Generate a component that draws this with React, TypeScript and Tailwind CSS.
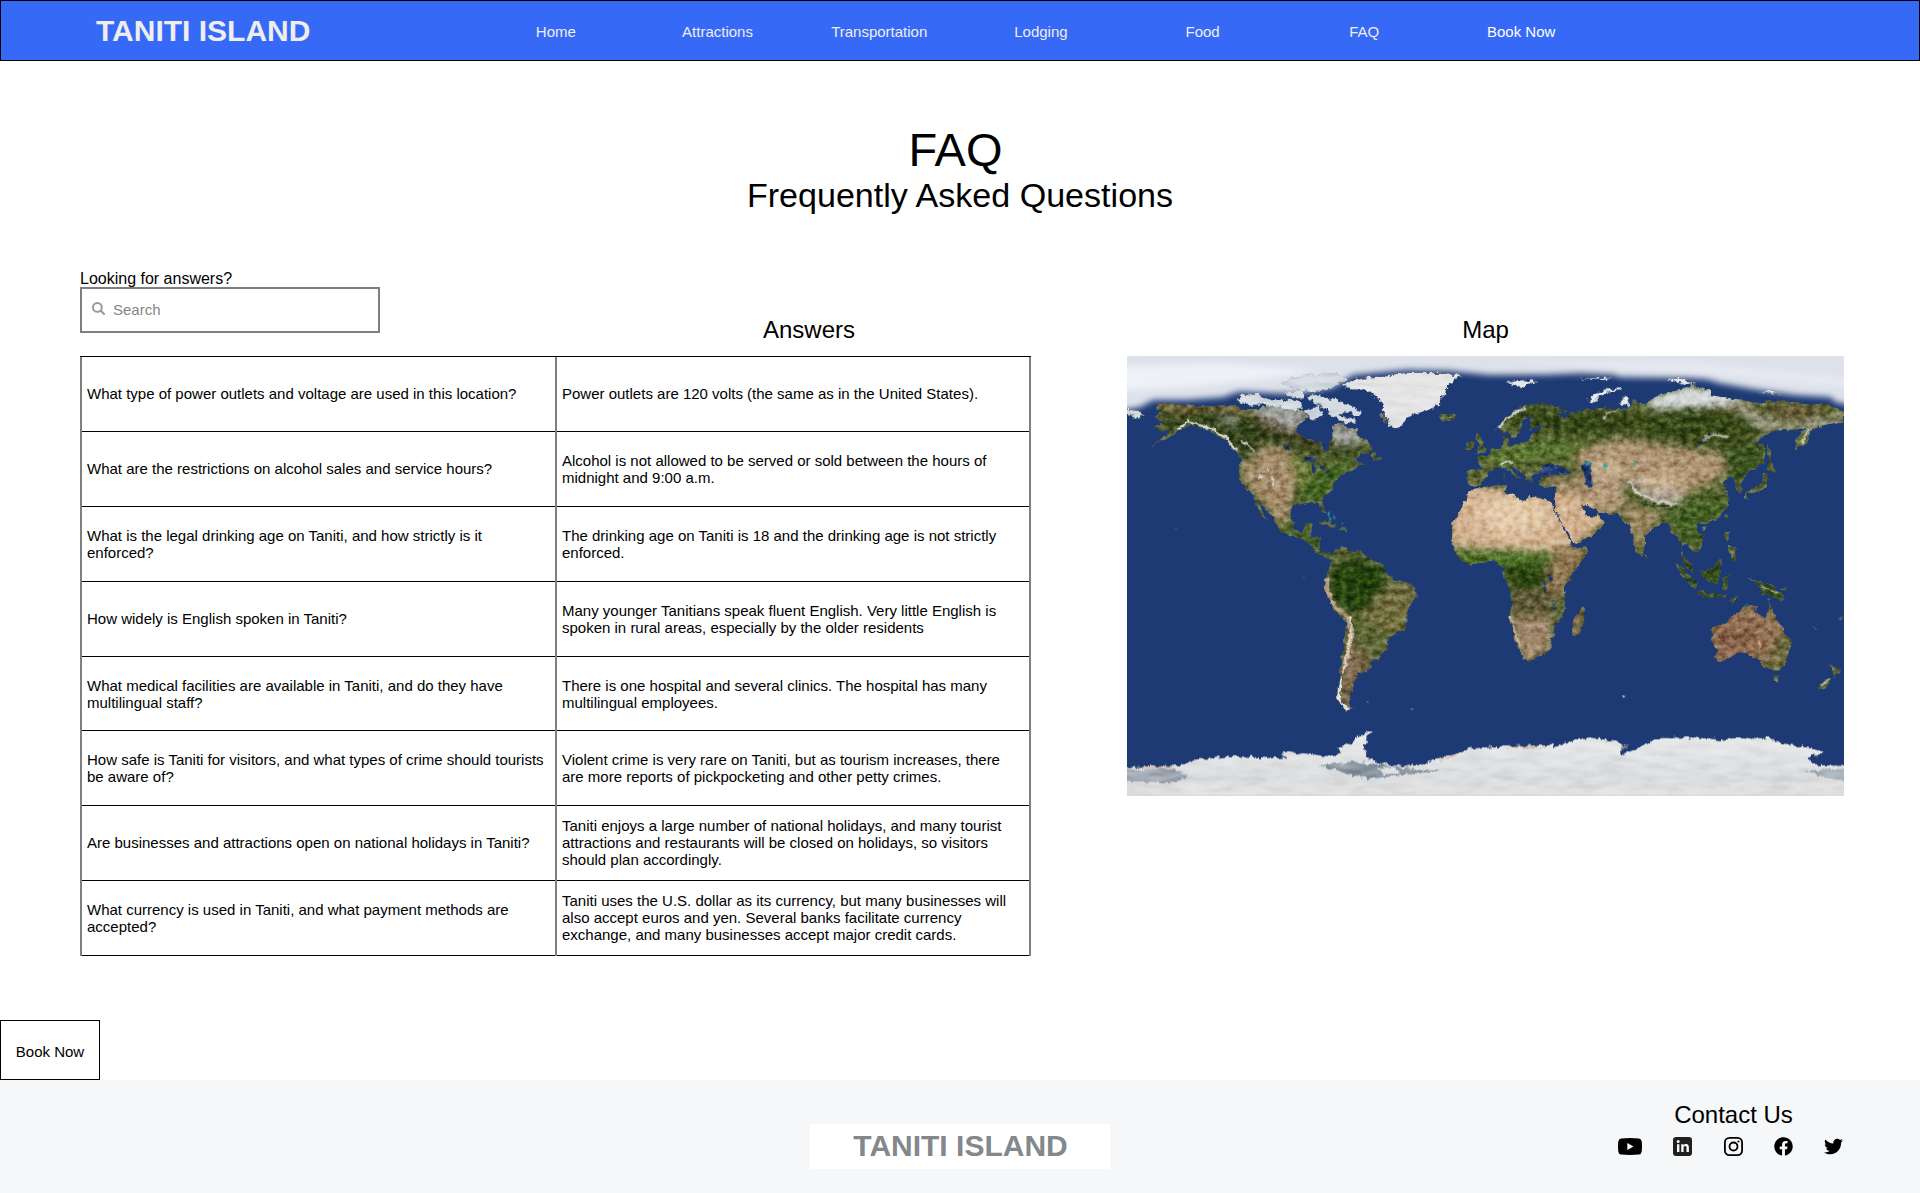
import React from "react";
import { FaFacebook, FaTwitter } from "react-icons/fa";

const navItems = ["Home", "Attractions", "Transportation", "Lodging", "Food", "FAQ"];

const faqs: { q: string; a: string; h: string; lift: string }[] = [
  {
    q: "What type of power outlets and voltage are used in this location?",
    a: "Power outlets are 120 volts (the same as in the United States).",
    h: "h-[75px]",
    lift: "pb-px",
  },
  {
    q: "What are the restrictions on alcohol sales and service hours?",
    a: "Alcohol is not allowed to be served or sold between the hours of midnight and 9:00 a.m.",
    h: "h-[75px]",
    lift: "pb-[0.8px]",
  },
  {
    q: "What is the legal drinking age on Taniti, and how strictly is it enforced?",
    a: "The drinking age on Taniti is 18 and the drinking age is not strictly enforced.",
    h: "h-[75px]",
    lift: "pb-0",
  },
  {
    q: "How widely is English spoken in Taniti?",
    a: "Many younger Tanitians speak fluent English. Very little English is spoken in rural areas, especially by the older residents",
    h: "h-[75px]",
    lift: "pb-[0.8px]",
  },
  {
    q: "What medical facilities are available in Taniti, and do they have multilingual staff?",
    a: "There is one hospital and several clinics. The hospital has many multilingual employees.",
    h: "h-[74px]",
    lift: "pb-0",
  },
  {
    q: "How safe is Taniti for visitors, and what types of crime should tourists be aware of?",
    a: "Violent crime is very rare on Taniti, but as tourism increases, there are more reports of pickpocketing and other petty crimes.",
    h: "h-[75px]",
    lift: "pb-0",
  },
  {
    q: "Are businesses and attractions open on national holidays in Taniti?",
    a: "Taniti enjoys a large number of national holidays, and many tourist attractions and restaurants will be closed on holidays, so visitors should plan accordingly.",
    h: "h-[75px]",
    lift: "pb-px",
  },
  {
    q: "What currency is used in Taniti, and what payment methods are accepted?",
    a: "Taniti uses the U.S. dollar as its currency, but many businesses will also accept euros and yen. Several banks facilitate currency exchange, and many businesses accept major credit cards.",
    h: "h-[75px]",
    lift: "pb-[0.8px]",
  },
];

/* Outlines of the western hemisphere, in the west half's own coordinates. */
const westLand = [
  "M118,162 160,160 215,165 290,170 340,165 385,182 440,170 470,160 500,165 560,185 560,205 530,225 530,245 550,262 580,270 605,278 612,300 625,300 625,275 638,262 635,225 660,220 690,235 712,238 725,265 755,290 760,300 745,310 720,312 705,330 735,340 700,358 680,362 660,378 645,390 640,415 615,438 603,450 612,470 617,490 606,490 596,458 575,455 555,463 535,460 515,472 514,510 525,540 548,545 558,522 578,520 572,545 570,562 598,568 598,600 615,615 632,612 645,625 632,628 612,620 590,605 565,578 540,562 510,555 480,540 468,525 460,505 440,480 412,445 432,488 443,508 430,502 412,468 398,435 385,425 370,405 357,380 356,350 362,325 345,302 325,280 300,262 270,245 235,232 200,230 180,240 155,258 125,273 90,290 122,268 150,244 125,242 105,232 130,215 100,200 130,190 105,178Z",
  "M632,640 640,610 665,590 680,600 700,600 725,602 745,628 775,635 795,655 800,682 830,690 862,700 885,715 887,740 870,770 862,785 862,820 850,842 820,850 805,870 802,890 775,930 750,932 757,950 735,965 712,970 715,985 700,1000 700,1015 690,1040 685,1055 690,1068 705,1080 675,1080 655,1055 650,1030 660,970 665,930 672,880 678,820 660,800 640,780 625,745 612,715 615,690 625,665Z",
  "M955,198 975,192 1005,195 1012,205 990,213 965,208Z",
  "M1068,250 1082,252 1085,280 1105,295 1098,306 1066,310 1080,290 1070,275Z",
  "M1042,278 1060,272 1060,292 1038,300Z",
  "M593,515 620,508 652,528 640,532 610,518Z",
  "M655,545 668,532 688,542 670,546Z",
  "M748,318 765,305 780,330 765,332Z",
  "M736,1055 750,1055 745,1061Z",
];

/* Outlines of the eastern hemisphere, in the east half's own coordinates. */
const eastLand = [
  "M50,235 65,212 90,195 120,172 165,160 200,162 240,175 262,185 230,195 250,205 280,188 330,178 375,173 410,178 440,180 460,150 500,165 510,148 545,130 600,120 640,108 690,118 690,135 720,140 790,150 820,158 900,152 950,160 1000,165 1060,168 1092,185 1092,215 1050,225 1010,235 990,245 985,270 952,302 945,270 965,245 985,230 940,240 900,240 870,245 840,265 820,278 850,285 856,310 850,340 830,355 810,362 790,375 785,395 788,420 775,425 768,405 765,385 745,380 722,395 745,405 735,420 745,440 742,470 720,500 690,515 668,520 650,522 655,545 668,565 668,590 648,613 640,600 625,590 612,580 605,590 612,620 632,640 636,665 620,650 605,620 603,580 595,560 580,558 570,530 560,515 540,520 520,535 495,555 495,590 484,617 470,605 455,560 450,525 430,515 415,492 385,490 355,488 345,480 325,468 305,458 310,480 325,498 345,500 354,488 360,505 372,515 360,540 330,560 280,583 265,550 240,515 225,480 222,450 230,415 232,408 200,410 180,408 178,390 182,378 240,375 240,345 190,345 175,375 158,372 150,380 158,400 145,395 135,378 115,365 92,345 90,355 118,375 125,388 100,375 80,355 60,352 30,362 15,385 -5,405 -35,408 -38,380 -35,362 10,358 5,345 -10,325 20,318 40,300 65,290 70,262 80,258 85,285 110,285 150,268 155,250 180,240 190,232 150,235 148,215 158,198 145,195 128,215 120,240 110,265 92,262 85,240 65,248Z",
  "M-25,418 10,410 75,405 80,425 110,445 130,455 150,438 200,450 215,455 225,490 245,530 270,570 275,595 320,592 318,615 295,650 265,690 250,715 258,745 255,785 235,805 225,830 228,855 210,865 212,885 195,910 165,928 130,930 122,905 105,875 100,835 88,800 95,760 90,720 72,680 75,660 60,645 40,630 0,640 -30,643 -60,630 -75,600 -85,580 -82,515 -60,480 -40,450 -35,425Z",
  "M310,770 316,785 300,850 290,865 277,860 278,835 285,800 300,790Z",
  "M865,283 873,300 872,340 884,362 864,364Z",
  "M852,368 862,375 860,412 835,422 800,434 803,446 795,446 797,430 825,412 848,395Z",
  "M738,492 744,500 736,515Z",
  "M736,542 746,545 745,575 736,570Z",
  "M745,590 765,592 770,630 755,632Z",
  "M665,530 678,530 672,544Z",
  "M585,638 605,650 650,700 648,720 615,690Z",
  "M650,722 690,730 742,738 735,746 655,733Z",
  "M750,748 775,740 760,756Z",
  "M668,665 695,655 715,628 724,650 712,700 690,702 670,685Z",
  "M730,680 752,668 740,690 748,715 730,718Z",
  "M800,682 830,696 880,708 900,728 915,752 870,740 845,728 838,710Z",
  "M905,720 925,712 915,724Z",
  "M695,840 700,830 740,820 770,785 800,765 830,768 828,790 855,805 862,790 867,755 885,800 910,840 932,870 930,905 910,950 880,962 850,955 835,930 820,920 790,908 750,920 715,935 705,925 710,900 695,870Z",
  "M880,976 902,978 893,995Z",
  "M1050,933 1066,955 1080,960 1065,982 1058,965Z",
  "M1055,982 1032,1018 1013,1014 1040,988Z",
  "M494,608 504,625 498,633Z",
  "M68,368 74,370 74,388 68,388Z",
];

const westSnow = [
  "M350,150 365,130 420,135 450,150 500,148 545,155 545,178 500,180 480,172 430,165 380,165Z",
  "M480,100 540,78 660,70 682,90 620,120 570,125 510,115Z",
  "M560,140 600,136 650,150 690,165 725,185 712,197 680,185 655,195 700,205 712,222 660,215 635,198 615,172 580,160Z",
  "M548,178 600,168 608,195 590,210 565,202Z",
  "M490,125 550,122 548,142 500,140Z",
  "M21,178 60,182 75,195 50,205 21,195Z",
];
const greenland =
  "M665,105 700,90 780,78 860,68 980,68 1025,78 985,100 980,125 960,150 965,165 910,185 860,200 845,225 832,238 810,228 795,200 790,160 765,140 745,122 700,118Z";
const eastSnow = [
  "M325,155 335,135 370,118 428,114 425,120 380,128 350,142 355,158Z",
  "M80,97 130,90 178,92 140,105 120,115Z",
  "M560,85 600,85 650,103 610,104Z",
  "M285,88 350,84 402,80 380,90Z",
  "M835,122 910,127 870,132Z",
  "M415,160 435,142 450,150 445,165 425,168Z",
];

const west = "translate(-21 -18)";
const east = "translate(1059 -18)";

function WorldMap() {
  return (
    <svg
      className="block h-[440px] w-[717px]"
      viewBox="0 0 2151 1320"
      preserveAspectRatio="none"
      role="img"
      aria-label="World map"
    >
      <defs>
        <clipPath id="land">
          {westLand.map((d) => (
            <path key={d} d={d} transform={west} />
          ))}
          {eastLand.map((d) => (
            <path key={d} d={d} transform={east} />
          ))}
        </clipPath>
        <filter id="soft" x="-50%" y="-50%" width="200%" height="200%" colorInterpolationFilters="sRGB">
          <feGaussianBlur stdDeviation="13" />
        </filter>
        <filter id="haze" x="-10%" y="-50%" width="120%" height="200%" colorInterpolationFilters="sRGB">
          <feGaussianBlur stdDeviation="9" />
        </filter>
        <filter
          id="terrain"
          filterUnits="userSpaceOnUse"
          x="0"
          y="0"
          width="2151"
          height="1320"
          colorInterpolationFilters="sRGB"
        >
          <feTurbulence type="fractalNoise" baseFrequency="0.045" numOctaves="4" seed="4" result="warp" />
          <feDisplacementMap in="SourceGraphic" in2="warp" scale="20" xChannelSelector="R" yChannelSelector="G" result="shape" />
          <feTurbulence type="fractalNoise" baseFrequency="0.05 0.06" numOctaves="5" seed="11" />
          <feColorMatrix values="1 0 0 0 -0.02  1 0 0 0 -0.02  1 0 0 0 -0.02  0 0 0 0 1" result="grain" />
          <feBlend in="grain" in2="shape" mode="soft-light" />
          <feComposite in2="shape" operator="in" />
        </filter>
        <filter
          id="ice"
          filterUnits="userSpaceOnUse"
          x="0"
          y="0"
          width="2151"
          height="1320"
          colorInterpolationFilters="sRGB"
        >
          <feTurbulence type="fractalNoise" baseFrequency="0.06" numOctaves="4" seed="7" result="warp" />
          <feDisplacementMap in="SourceGraphic" in2="warp" scale="22" xChannelSelector="R" yChannelSelector="G" result="shape" />
          <feTurbulence type="fractalNoise" baseFrequency="0.012 0.05" numOctaves="5" seed="3" />
          <feColorMatrix values="0.7 0 0 0 0.15  0.7 0 0 0 0.15  0.7 0 0 0 0.15  0 0 0 0 1" result="grain" />
          <feBlend in="grain" in2="shape" mode="soft-light" />
          <feComposite in2="shape" operator="in" />
        </filter>
        <linearGradient id="southIce" x1="0" y1="0" x2="0" y2="1">
          <stop offset="0" stopColor="#e9eaec" />
          <stop offset="0.6" stopColor="#dcdddf" />
          <stop offset="1" stopColor="#e6e6e7" />
        </linearGradient>
      </defs>

      <rect width="2151" height="1320" fill="#1e3a74" />

      {/* Arctic pack ice */}
      <g transform={west} filter="url(#haze)">
        <path
          d="M-40,-60 H2220 V168 L2150,158 2130,142 2030,136 1900,118 1800,100 1760,88 1700,84 1500,82 1480,74 1380,70 1280,74 1110,75 980,62 860,60 700,75 640,112 520,132 355,125 310,142 200,150 100,150 60,172 -40,190Z"
          fill="#dde1ea"
        />
        <path d="M-40,50 L300,40 600,62 400,90 200,110 -40,125Z" fill="#eff1f8" />
        <path d="M1100,30 L1700,35 2200,85 2200,115 1800,75 1400,50Z" fill="#e6e9f0" />
      </g>

      {/* Continents */}
      <g filter="url(#terrain)">
        <g clipPath="url(#land)">
          <rect width="2151" height="1320" fill="#5f6936" />
          <g filter="url(#soft)">
            <g transform={west}>
              <path d="M90,150 L400,160 400,190 300,185 100,185Z" fill="#7d6a3c" />
              <path d="M120,195 L300,180 480,235 600,285 760,300 700,325 520,300 420,275 380,330 340,290 250,225 130,235Z" fill="#34441a" />
              <path d="M380,195 L560,240 600,275 560,280 420,230Z" fill="#57482c" />
              <path d="M380,160 L560,165 560,235 500,240 420,200Z" fill="#a0a39f" />
              <path d="M630,215 L715,230 735,275 680,290 630,270Z" fill="#a0a19f" />
              <path d="M290,190 L350,205 350,235 310,225Z" fill="#90958a" />
              <path d="M420,285 L510,290 530,360 525,420 510,470 500,530 460,500 400,425 365,390 368,330 400,340Z" fill="#a68e6c" />
              <path d="M490,300 L560,340 580,400 530,430 520,350Z" fill="#74813d" />
              <path d="M580,370 L700,320 650,400 610,440 530,460 540,420Z" fill="#41651f" />
              <path d="M470,520 L600,540 640,620 580,600 500,550Z" fill="#4d6826" />
              <path d="M635,650 L710,625 790,650 800,740 770,780 700,790 650,755 625,700Z" fill="#24430d" />
              <path d="M720,795 L800,700 880,720 860,840 790,860Z" fill="#75703f" />
              <path d="M830,700 L890,710 885,745 850,740Z" fill="#7b7250" />
              <path d="M670,930 L700,870 755,940 700,1010 690,1070 655,1060Z" fill="#826a50" />
            </g>
            <g transform={east}>
              <path d="M-90,400 L230,430 290,590 190,605 -90,590Z" fill="#d5b696" />
              <path d="M-20,480 L90,430 190,470 200,530 60,560Z" fill="#e3cbab" />
              <path d="M-90,605 L230,605 200,640 60,650 -60,650Z" fill="#517629" />
              <path d="M75,645 L195,645 190,710 110,715 75,690Z" fill="#2a450f" />
              <path d="M225,600 L330,595 290,660 240,740 200,740 205,650Z" fill="#8f7650" />
              <path d="M90,725 L200,720 215,790 100,790Z" fill="#615837" />
              <path d="M90,800 L215,800 215,900 130,940Z" fill="#a3896d" />
              <path d="M215,410 L300,430 380,515 280,590 220,490Z" fill="#d3b492" />
              <path d="M180,385 L300,375 330,440 230,420Z" fill="#94805b" />
              <path d="M60,200 L150,165 500,190 780,160 830,200 820,270 640,290 480,250 300,260 180,250 90,220Z" fill="#384a18" />
              <path d="M690,150 L780,155 830,170 800,195 680,175Z" fill="#6b5e38" />
              <path d="M500,150 L600,115 690,115 790,150 780,165 620,172 520,178Z" fill="#dcdfe2" />
              <path d="M780,150 L840,200 960,225 990,205 1060,205 1092,180 1092,225 940,245 840,235 785,200Z" fill="#a5a38f" />
              <path d="M840,165 L1050,175 1000,205 900,205Z" fill="#665835" />
              <path d="M-40,310 L170,270 330,275 290,320 180,335 60,345Z" fill="#5a742f" />
              <path d="M280,310 L420,265 520,280 720,310 770,320 720,380 620,430 430,400 320,400 300,350Z" fill="#b09675" />
              <path d="M300,400 L420,400 440,460 400,490 330,475Z" fill="#b49b7b" />
              <path d="M335,330 L420,330 430,370 345,385Z" fill="#c9b493" />
              <path d="M440,385 L560,395 620,440 600,475 520,465Z" fill="#b3a796" />
              <path d="M480,380 L600,378 600,405 500,408Z" fill="#d6bb96" />
              <path d="M430,460 L540,490 510,540 480,600 440,520Z" fill="#a08b65" />
              <path d="M560,480 L640,440 740,440 735,500 660,525 660,600 590,560Z" fill="#476225" />
              <path d="M760,285 L860,290 840,350 770,420 720,300Z" fill="#3b531e" />
              <path d="M580,640 L920,640 920,750 640,740Z" fill="#36501b" />
              <path d="M690,770 L860,765 940,870 900,940 690,940Z" fill="#947355" />
              <path d="M700,840 L830,830 830,890 720,900Z" fill="#876148" />
              <path d="M900,850 L940,870 930,970 850,965Z" fill="#6d6a3d" />
              <path d="M275,770 L305,770 295,870 270,870Z" fill="#8f6e51" />
            </g>
          </g>
          <g fill="none" strokeLinecap="round" strokeLinejoin="round">
            <g transform={west}>
              <path d="M622,690 618,720 640,765 680,800 695,840 685,900 675,950" stroke="#b39d83" strokeWidth="14" />
              <path d="M690,800 692,850 680,920 672,970" stroke="#dccdc2" strokeWidth="6" />
              <path d="M662,985 656,1035 664,1062 685,1078" stroke="#dfe4e8" strokeWidth="8" />
              <path d="M175,235 200,216 240,225 285,240 318,265 350,300" stroke="#dadcd8" strokeWidth="7" />
              <path d="M365,270 405,305" stroke="#b3b7b0" strokeWidth="7" />
              <path d="M420,375 422,385M455,380 460,400M440,355 442,360" stroke="#cfcdc2" strokeWidth="7" />
              <path d="M360,370 385,425" stroke="#6a6b34" strokeWidth="8" />
            </g>
            <g transform={east}>
              <path d="M55,235 70,212 100,193 130,175" stroke="#c5c8c8" strokeWidth="9" />
              <path d="M60,345 85,335 95,342" stroke="#d7d7d2" strokeWidth="5" />
              <path d="M370,205 378,190 410,183" stroke="#a9af9f" strokeWidth="4" />
              <path d="M455,430 500,464 590,474" stroke="#3a511a" strokeWidth="8" />
              <path d="M450,395 470,425 520,452 590,462" stroke="#cbc5bd" strokeWidth="9" />
              <path d="M670,270 700,250 740,260" stroke="#a0a295" strokeWidth="9" />
              <path d="M965,275 985,240" stroke="#c0c0b7" strokeWidth="7" />
              <path d="M835,708 895,725" stroke="#b7ae98" strokeWidth="4" />
              <path d="M838,870 842,890" stroke="#c2a071" strokeWidth="8" />
              <path d="M1022,1008 1045,988" stroke="#b9bcb4" strokeWidth="5" />
              <path d="M92,800 105,850 120,885" stroke="#d4bb9c" strokeWidth="6" />
            </g>
          </g>
        </g>

        {/* Inland seas and lakes */}
        <g fill="#1e3a74">
          <g transform={east}>
            <path d="M184,373 192,347 212,338 225,352 245,347 260,358 276,371 240,376 215,371Z" />
            <path d="M303,345 318,335 332,338 326,355 332,372 338,392 334,410 318,405 315,380 305,360Z" />
            <path d="M205,678 218,678 216,692 206,692Z" />
            <path d="M190,690 195,692 198,738 193,730ZM220,735 224,750 224,785 220,770Z" />
            <path d="M643,300 665,280 672,262 668,285Z" />
            <path d="M180,225 192,222 190,232 180,234Z" />
          </g>
          <g transform={west}>
            <path d="M548,330 575,320 595,332 570,336Z" />
            <path d="M575,348 588,342 585,368 577,368Z" />
            <path d="M595,342 618,350 605,362Z" />
            <path d="M608,368 640,358 622,370Z" />
            <path d="M485,280 497,285 510,305 500,300Z" />
          </g>
        </g>
      </g>
      <g fill="#2aa7a8" opacity="0.85">
        <g transform={east}>
          <path d="M316,336 332,336 330,345 318,346ZM368,345 378,338 384,350 372,356ZM456,340 468,335 466,342 458,348ZM796,762 806,764 800,768ZM862,745 872,747 864,752ZM335,395 340,398 337,406Z" />
        </g>
        <g transform={west}>
          <path d="M622,490 630,482 628,500 636,508 630,512ZM640,492 648,508 640,505ZM665,515 670,522 666,524Z" />
        </g>
      </g>

      {/* Snow-covered islands */}
      <g filter="url(#ice)">
        <g transform={west} fill="#d3dae0">
          {westSnow.map((d) => (
            <path key={d} d={d} />
          ))}
          <path d={greenland} fill="#e6e5e6" />
        </g>
        <g transform={east} fill="#e6ebef">
          {eastSnow.map((d) => (
            <path key={d} d={d} />
          ))}
        </g>
        <g transform={west}>
          <path d="M980,203 1000,201 995,207Z" fill="#eceeee" />
          <path d="M785,190 798,205 800,225 780,195Z" fill="#8a806e" />
        </g>
      </g>

      {/* Antarctica */}
      <g filter="url(#ice)">
        <g transform={west}>
          <path
            d="M-20,1252 120,1250 180,1245 230,1228 340,1218 420,1222 470,1225 500,1222 480,1212 520,1205 610,1218 640,1215 670,1205 645,1195 690,1180 720,1155 765,1140 740,1160 735,1190 740,1225 780,1240 850,1248 900,1245 950,1225 1000,1210 1060,1195 1110,1190 1295,1185 1310,1190 1330,1180 1400,1162 1440,1165 1490,1175 1510,1182 1500,1215 1540,1200 1610,1165 1700,1162 1770,1165 1800,1170 1860,1162 1950,1165 1990,1180 2060,1192 2110,1205 2100,1215 2070,1220 2075,1245 2200,1248 2200,1380 -20,1380Z"
            fill="url(#southIce)"
          />
          <path d="M-10,1258 150,1256 205,1275 160,1298 -10,1292Z" fill="#a0a9b2" />
          <path d="M600,1245 700,1235 820,1250 960,1262 880,1272 760,1285 690,1275Z" fill="#8995a0" />
          <path d="M770,1255 820,1250 840,1270 790,1272Z" fill="#dcdddf" />
          <path d="M2060,1262 2200,1255 2200,1295 2120,1285Z" fill="#a9b4bd" />
          <path d="M1505,1185 1532,1182 1500,1210Z" fill="#7d828a" />
          <path d="M950,1230 1000,1211 1020,1212 975,1232Z" fill="#d8c4b2" />
          <path d="M60,1250 160,1247 160,1252 60,1255ZM1140,1190 1290,1186 1240,1194Z" fill="#cdb9a6" />
        </g>
      </g>
      <g transform={west} fill="#dfe3e8">
        <path d="M870,1074 882,1079 876,1079Z" />
        <path d="M1506,1036 1517,1039 1510,1043Z" />
      </g>
      <g transform={west} fill="#66704a">
        <path d="M164,530 171,535 167,539ZM548,680 556,684 550,685ZM2075,825 2093,840 2086,838ZM2155,805 2170,798 2162,812Z" />
      </g>
      <rect y="1316" width="2151" height="4" fill="#d8d9db" />
    </svg>
  );
}

function LinkedInIcon() {
  return (
    <svg className="size-[19px]" viewBox="0 0 19 19" aria-label="LinkedIn">
      <rect width="19" height="19" rx="3.2" fill="#20201c" />
      <g fill="#f5f7f9">
        <circle cx="5.2" cy="4.6" r="1.5" />
        <rect x="4" y="7.2" width="2.4" height="7.8" />
        <path d="M8.2 7.2h2.3v1.1c.5-.8 1.3-1.3 2.5-1.3 2.3 0 2.9 1.5 2.9 3.6V15h-2.4v-3.9c0-1-.1-2-1.3-2s-1.6.9-1.6 2V15H8.2z" />
      </g>
    </svg>
  );
}

function InstagramIcon() {
  return (
    <svg className="size-[19px]" viewBox="0 0 19 19" fill="none" stroke="#000" strokeWidth="1.8" aria-label="Instagram">
      <rect x="0.9" y="0.9" width="17.2" height="17.2" rx="4.6" />
      <circle cx="9.5" cy="9.5" r="4" />
      <circle cx="14.5" cy="4.5" r="1.1" fill="#000" stroke="none" />
    </svg>
  );
}

function YouTubeIcon() {
  return (
    <svg className="h-[17px] w-[24px]" viewBox="0 0 24 17" aria-label="YouTube">
      <path
        fillRule="evenodd"
        d="M3 .5Q12-.4 21 .5Q23.4.8 23.7 3.5Q24.3 8.5 23.7 13.5Q23.4 16.2 21 16.5Q12 17.4 3 16.5Q.6 16.2.3 13.5Q-.3 8.500.3 3.500Q.6.8 3 .5ZM9.300 5.100V11.900L15.500 8.500Z"
      />
    </svg>
  );
}

export default function App() {
  return (
    <div className="flex min-h-[1193px] w-[1920px] flex-col overflow-hidden bg-white font-['Liberation_Sans',Arial,sans-serif] text-black">
      <header className="flex h-[61px] items-center border border-black bg-[#3769f7] text-[15px] text-[#eeeeee]">
        <div className="w-[474px] pt-px pl-[95px] text-[30px] leading-none font-bold">TANITI ISLAND</div>
        <nav className="flex items-center pt-px leading-[17px]">
          {navItems.map((item) => (
            <a key={item} className="w-[161.7px] text-center">
              {item}
            </a>
          ))}
          <a className="w-[152px] text-center text-white">Book Now</a>
        </nav>
      </header>

      <section className="flex h-[206px] flex-col items-center pt-[62px]">
        <h1 className="mr-[9px] text-[47px] leading-[53px]">FAQ</h1>
        <h2 className="text-[34.1px] leading-[39px]">Frequently Asked Questions</h2>
      </section>

      <main className="flex h-[753px] pl-[80px]">
        <section className="w-[951px]">
          <div className="flex h-[89px]">
            <div className="w-[300px] shrink-0">
              <label className="block h-5 text-[16px] leading-[24px]">Looking for answers?</label>
              <div className="flex h-[46px] items-center gap-[8px] border-2 border-[#7f7f7f] pb-px pl-[10px]">
                <svg className="size-[13px] -translate-y-px" viewBox="0 0 13 13" fill="none" stroke="#999" strokeWidth="2" strokeLinecap="round">
                  <circle cx="5.400" cy="5.400" r="4.400" />
                  <path d="M8.800 8.800 12 12" />
                </svg>
                <span className="text-[15px] leading-[17px] text-[#868686]">Search</span>
              </div>
            </div>
            <h3 className="ml-[383px] pt-[49px] text-[24px] leading-[28px]">Answers</h3>
          </div>
          <div className="border-t border-black text-[15px] leading-[17px]">
            {faqs.map((f) => (
              <div key={f.q} className={`flex ${f.h}`}>
                <div className="w-0.5 bg-[#7f7f7f]" />
                <div className={`flex w-[473px] items-center border-b border-black px-[5px] ${f.lift}`}>
                  <p>{f.q}</p>
                </div>
                <div className="w-0.5 bg-[#7f7f7f]" />
                <div className={`flex w-[472px] items-center border-b border-black px-[5px] ${f.lift}`}>
                  <p>{f.a}</p>
                </div>
                <div className="w-0.5 bg-[#7f7f7f]" />
              </div>
            ))}
          </div>
        </section>

        <section className="ml-[96px] w-[717px]">
          <h3 className="h-[89px] pt-[49px] text-center text-[24px] leading-[28px]">Map</h3>
          <WorldMap />
        </section>
      </main>

      <button className="h-[60px] w-[100px] border border-black bg-white pt-[3px] text-[15px] leading-[17px]">
        Book Now
      </button>

      <footer className="grid h-[113px] grid-cols-[810px_300px_1fr] bg-[#f5f7f9]">
        <div />
        <div className="mt-[44px] flex h-[45px] items-center justify-center bg-white pb-px pl-px text-[30px] leading-none font-bold text-[#82888c]">
          TANITI ISLAND
        </div>
        <div className="ml-[508px] w-[225px] pt-[21px]">
          <h3 className="pl-[6px] text-center text-[24px] leading-[28px]">Contact Us</h3>
          <div className="mt-[8px] flex h-[19px] items-center justify-between">
            <YouTubeIcon />
            <LinkedInIcon />
            <InstagramIcon />
            <FaFacebook className="size-[19px]" />
            <FaTwitter className="size-[19px]" />
          </div>
        </div>
      </footer>
    </div>
  );
}
